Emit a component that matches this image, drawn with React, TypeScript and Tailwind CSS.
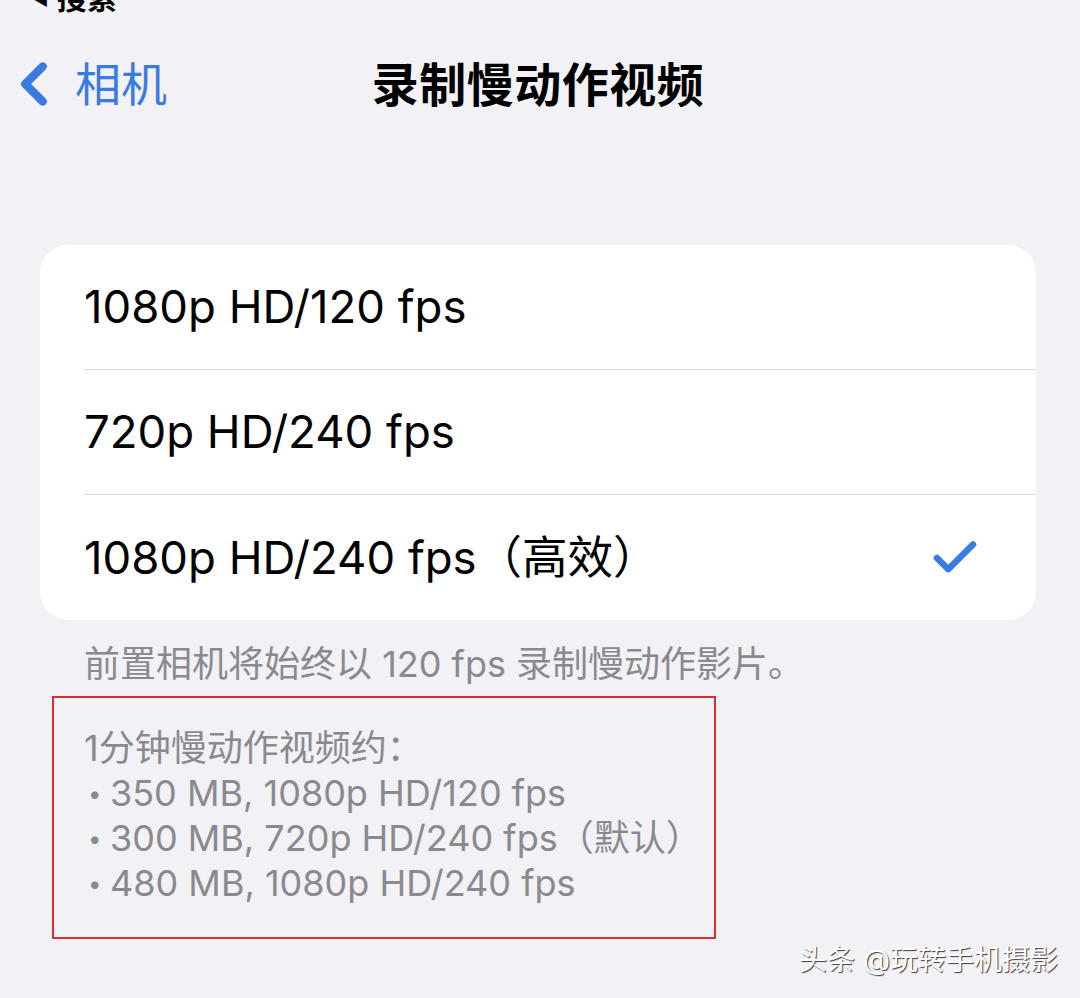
import { Check, ChevronLeft } from 'lucide-react'

const font = { fontFamily: 'Inter, "Noto Sans CJK SC", sans-serif' }

const options = [
  { label: '1080p HD/120 fps', selected: false },
  { label: '720p HD/240 fps', selected: false },
  { label: '1080p HD/240 fps（高效）', selected: true },
]

const sizes = [
  '350 MB, 1080p HD/120 fps',
  '300 MB, 720p HD/240 fps（默认）',
  '480 MB, 1080p HD/240 fps',
]

export default function App() {
  return (
    <div
      className="relative w-[1080px] h-[998px] overflow-hidden bg-[#f1f1f6] text-black"
      style={font}
    >
      {/* status bar back link, cut off at the top */}
      <div className="flex items-center gap-2 pl-[30px] -mt-[22px] h-[40px] text-[30px] font-semibold leading-none">
        <span className="text-[20px]">◀</span>
        <span>搜索</span>
      </div>

      {/* nav bar */}
      <div className="grid grid-cols-[1fr_auto_1fr] items-center h-[96px] mt-[18px]">
        <div className="flex items-center text-[#3a7be3]">
          <ChevronLeft className="w-[70px] h-[70px] -ml-[1px]" strokeWidth={2.8} />
          <span className="text-[46px] leading-none ml-[6px]">相机</span>
        </div>
        <div className="text-[47px] font-bold leading-none tracking-[0.5px] pr-[4px]">录制慢动作视频</div>
        <div />
      </div>

      {/* options card */}
      <div className="mx-[40px] mt-[113px] w-[996px] rounded-[28px] bg-white pl-[44px] overflow-hidden">
        {options.map((o, i) => (
          <div
            key={o.label}
            className={`flex items-center justify-between h-[125px] pr-[54px] ${
              i < options.length - 1 ? 'border-b border-[#d9d9dc]' : ''
            }`}
          >
            <span className="text-[45.5px] leading-none">{o.label}</span>
            {o.selected && <Check className="w-[54px] h-[54px] text-[#3a7be3]" strokeWidth={2.9} />}
          </div>
        ))}
      </div>

      <p className="pl-[84px] mt-[26px] text-[36px] leading-none text-[#8a8a8e]">
        前置相机将始终以 120 fps 录制慢动作影片。
      </p>

      {/* highlighted note */}
      <div className="ml-[52px] mt-[14px] w-[664px] h-[243px] border-2 border-[#d9302f] pl-[30px] pt-[28px] text-[36px] leading-[45px] text-[#8a8a8e]">
        <div>1分钟慢动作视频约：</div>
        {sizes.map((s) => (
          <div key={s} className="flex items-center">
            <span className="w-[26px] pl-[4px] text-[24px]">•</span>
            <span>{s}</span>
          </div>
        ))}
      </div>

      {/* watermark */}
      <div className="absolute right-[22px] bottom-[24px] text-[28px] leading-none text-white [text-shadow:1px_1px_1px_rgba(0,0,0,0.75)]">
        头条 @玩转手机摄影
      </div>
    </div>
  )
}
